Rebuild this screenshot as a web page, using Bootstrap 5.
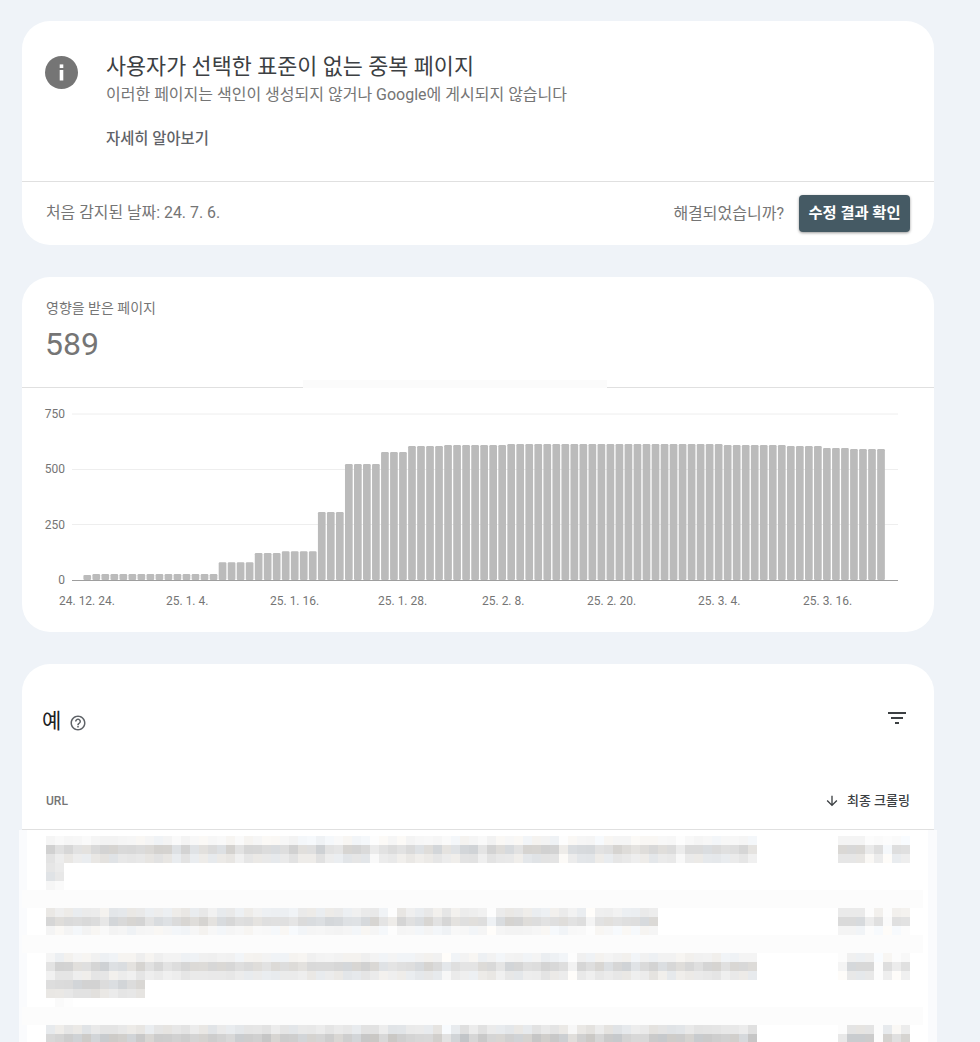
<!DOCTYPE html>
<html lang="ko">
<head>
<meta charset="utf-8">
<title>중복 페이지</title>
<link href="https://cdn.jsdelivr.net/npm/bootstrap@5.3.0/dist/css/bootstrap.min.css" rel="stylesheet">
<style>
html,body{height:1042px;overflow:hidden}
body{background:#eff3f8;font-family:Roboto,"Noto Sans CJK KR",sans-serif;color:#757575;padding:21px 46px 0 22px}
.panel{background:#fff;border:0;border-radius:28px;margin-bottom:32px;width:912px}
.panel-top{height:160px;padding:0 24px 0 23px}
.info-ic{width:33px;height:33px;margin-top:35px;flex:none}
.issue-body{margin-left:28px;padding-top:31px}
.issue-title{font-size:21.8px;line-height:30px;color:#3c4043;font-weight:400;margin:0 0 2px}
.issue-sub{font-size:16px;line-height:22px;color:#757575;margin:0}
.learn{display:block;font-size:15.4px;line-height:20px;font-weight:500;color:#5f6368;text-decoration:none;margin-top:23px}
.panel-foot{height:64px;padding:0 24px;border-top:1px solid #e0e0e0;font-size:16px}
.found-date{font-size:15.9px;margin-bottom:2px}
.fix-btn{background:#455a64;color:#fff;font-size:15.3px;font-weight:700;border:0;border-radius:4px;height:37px;width:111px;padding:0;margin-left:15px;box-shadow:0 1px 3px rgba(0,0,0,.4)}
.fix-btn:hover{background:#455a64;color:#fff}
.metric{height:111px;padding:21px 24px 0;border-bottom:1px solid #e0e0e0;position:relative}
.metric-label{font-size:14px;line-height:20px}
.metric-value{font-size:32px;line-height:52px;color:#757575;margin-left:-1px}
.metric-fade{position:absolute;left:281px;top:103px;width:304px;height:8px;background:#fbfbfb}
.chart{display:block;width:912px;height:244px}
.chart text{font-family:Roboto,sans-serif;font-size:12px;fill:#757575}
.ex-head{height:166px;padding:0 24px 0 20px;border-bottom:1px solid #e0e0e0;position:relative}
.ex-row1{padding-top:42px;height:121px}
.ex-title{font-size:21px;line-height:30px;color:#202124;margin:0;font-weight:400}
.help-ic{width:18px;height:18px;margin:3px 0 0 8px;fill:#5f6368}
.filter-ic{width:24px;height:24px;fill:#3c4043;margin-right:1px}
.ex-cols{padding-left:4px;height:32px;font-size:12px;font-weight:500}
.sort-label{color:#3c4043;font-size:13px}
.sort-ic{width:16px;height:16px;fill:#3c4043;margin-right:7px}
.mosaic{display:block;margin-left:-3px;width:918px;height:212px}
</style>
</head>
<body>
<div class="card panel">
  <div class="panel-top d-flex align-items-start">
    <svg class="info-ic" viewBox="0 0 33 33"><circle cx="16.5" cy="16.5" r="16.5" fill="#757575"/><rect x="14.7" y="14" width="3.6" height="10.5" fill="#fff"/><rect x="14.7" y="8.4" width="3.6" height="3.6" fill="#fff"/></svg>
    <div class="issue-body">
      <h1 class="issue-title">사용자가 선택한 표준이 없는 중복 페이지</h1>
      <p class="issue-sub">이러한 페이지는 색인이 생성되지 않거나 Google에 게시되지 않습니다</p>
      <a class="learn" href="#">자세히 알아보기</a>
    </div>
  </div>
  <div class="panel-foot d-flex align-items-center justify-content-between">
    <span class="found-date">처음 감지된 날짜: 24. 7. 6.</span>
    <div class="d-flex align-items-center"><span>해결되었습니까?</span><button class="btn fix-btn" type="button">수정 결과 확인</button></div>
  </div>
</div>

<div class="card panel">
  <div class="metric">
    <div class="metric-label">영향을 받은 페이지</div>
    <div class="metric-value">589</div>
    <div class="metric-fade"></div>
  </div>
  <svg class="chart" id="chart" viewBox="0 0 912 244" role="img" aria-label="영향을 받은 페이지 차트"></svg>
</div>

<div class="card panel">
  <div class="ex-head">
    <div class="ex-row1 d-flex align-items-start justify-content-between">
      <div class="d-flex align-items-center">
        <h2 class="ex-title">예</h2>
        <svg class="help-ic" viewBox="0 0 24 24"><path d="M11 18h2v-2h-2v2zm1-16C6.48 2 2 6.48 2 12s4.48 10 10 10 10-4.48 10-10S17.52 2 12 2zm0 18c-4.41 0-8-3.59-8-8s3.59-8 8-8 8 3.59 8 8-3.59 8-8 8zm0-14c-2.21 0-4 1.79-4 4h2c0-1.1.9-2 2-2s2 .9 2 2c0 2-3 1.75-3 5h2c0-2.25 3-2.5 3-5 0-2.21-1.79-4-4-4z"/></svg>
      </div>
      <svg class="filter-ic" viewBox="0 0 24 24"><path d="M10 18h4v-2h-4v2zM3 6v2h18V6H3zm3 7h12v-2H6v2z"/></svg>
    </div>
    <div class="ex-cols d-flex align-items-center justify-content-between">
      <span>URL</span>
      <span class="sort-label d-flex align-items-center"><svg class="sort-ic" viewBox="0 0 24 24"><path d="M20 12l-1.41-1.41L13 16.17V4h-2v12.17l-5.58-5.59L4 12l8 8 8-8z"/></svg>최종 크롤링</span>
    </div>
  </div>
  <svg class="mosaic" id="mosaic" viewBox="0 0 918 212" aria-hidden="true"></svg>
</div>

<script>
(function(){
  var NS='http://www.w3.org/2000/svg';
  function el(parent,tag,attrs,text){var e=document.createElementNS(NS,tag);for(var k in attrs)e.setAttribute(k,attrs[k]);if(text)e.textContent=text;parent.appendChild(e);return e;}

  var ch=document.getElementById('chart'),ox=-22,oy=-388;
  [[750,414],[500,469.5],[250,524.5]].forEach(function(g){
    el(ch,'line',{x1:72+ox,x2:898+ox,y1:g[1]+oy,y2:g[1]+oy,stroke:'#eeeeee','stroke-width':1});
  });
  var runs=[[23,1],[27,14],[80,4],[122,3],[130,4],[307,3],[524,4],[578,3],[605,4],[610,7],[614,24],[610,7],[605,4],[597,3],[592,4]];
  var i=0;
  runs.forEach(function(r){for(var n=0;n<r[1];n++,i++){
    var h=r[0]*0.2213;
    el(ch,'rect',{x:83.4+i*9.02+ox,y:580-h+oy,width:7.7,height:h,rx:1.2,fill:'#bbbbbb'});
  }});
  el(ch,'line',{x1:72+ox,x2:898+ox,y1:580.5+oy,y2:580.5+oy,stroke:'#9e9e9e','stroke-width':1});
  [['750',414],['500',469],['250',524.5],['0',580]].forEach(function(t){
    el(ch,'text',{x:65+ox,y:t[1]+4+oy,'text-anchor':'end'},t[0]);
  });
  [['24. 12. 24.',59],['25. 1. 4.',166],['25. 1. 16.',270],['25. 1. 28.',378],['25. 2. 8.',482],['25. 2. 20.',587],['25. 3. 4.',698],['25. 3. 16.',803]].forEach(function(t){
    el(ch,'text',{x:t[1]+ox,y:605+oy},t[0]);
  });

  var m=document.getElementById('mosaic');
  var mx=-19,my=-830,seed=7;
  function rnd(){seed=(seed*16807)%2147483647;return seed/2147483647;}
  function cell(x,y,v){
    var t=rnd(),dr=t<.2?-3:t>.8?2:0,db=t<.2?3:t>.8?-3:0;
    el(m,'rect',{x:x+mx,y:y+my,width:9,height:9,fill:'rgb('+(v+dr)+','+v+','+(v+db)+')'});
  }
  el(m,'rect',{x:0,y:0,width:918,height:212,fill:'#ffffff'});
  el(m,'rect',{x:0,y:0,width:8,height:212,fill:'#fafbfd'});
  el(m,'rect',{x:909,y:0,width:9,height:212,fill:'#fafbfd'});
  [[890,18],[935,18],[1007,18]].forEach(function(b){
    el(m,'rect',{x:3,y:b[0]+my,width:901,height:b[1],fill:'#fcfcfc'});
  });
  function line(y,x0,x1,levels,holes){
    for(var x=x0,c=0;x<x1;x+=9,c++){
      var gap=holes&&holes.indexOf(c)>=0, w=rnd();
      levels.forEach(function(l){
        var spread=l<225?18:l<238?12:6;
        var v=Math.min(253,Math.round(l+(w-.45)*spread+rnd()*4));
        if(gap) v=Math.min(253,v+16);
        cell(x,y+levels.indexOf(l)*9,v);
      });
    }
  }
  var strong=[244,216,230],mid=[234,218,244],wrap=[240,216,232],last=[228,204,218];
  line(836,46,757,strong,[36,57,70]);
  line(863,46,64,[228,222]); line(881,46,64,[246]);
  line(908,46,658,mid,[38,49,60]);
  line(953,46,757,wrap,[44,58]);
  line(980,46,145,[212,226]); line(998,55,73,[247]);
  line(1025,46,757,last,[44,58]);
  var dateA=[[838,0],[847,0],[856,0],[865,18],[874,6],[883,32],[892,6],[901,8]];
  var dateB=[[838,28],[847,0],[856,0],[865,0],[874,60],[883,6],[892,20],[901,8]];
  [[836,strong,dateA],[908,mid,dateA],[953,wrap,dateB],[1025,last,dateB]].forEach(function(r){
    r[2].forEach(function(d){
      r[1].forEach(function(l,ri){cell(d[0],r[0]+ri*9,Math.min(252,l+d[1]));});
    });
  });
})();
</script>
<script src="https://cdn.jsdelivr.net/npm/bootstrap@5.3.0/dist/js/bootstrap.bundle.min.js"></script>
</body>
</html>
